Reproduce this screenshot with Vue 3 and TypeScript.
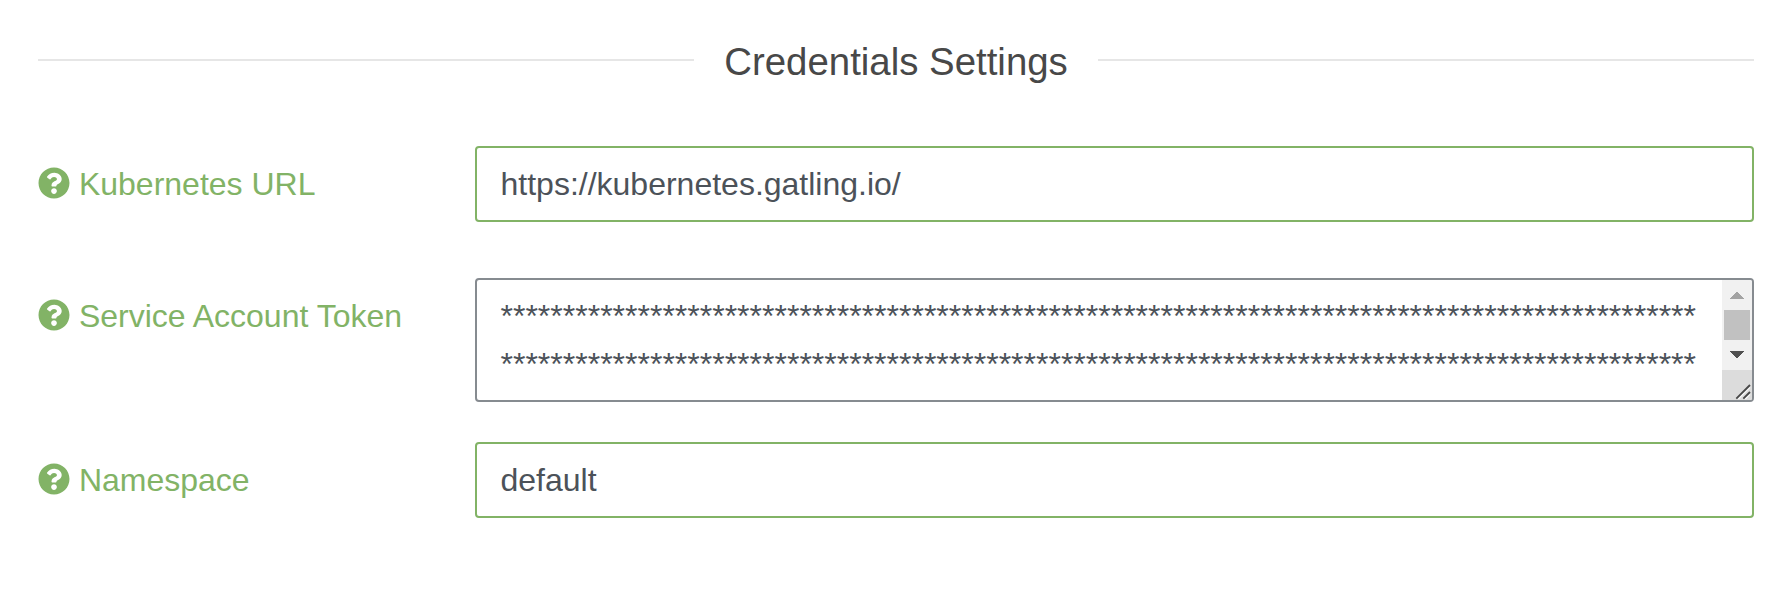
<script setup lang="ts">
import { ref } from 'vue'

interface Field {
  id: string
  label: string
  kind: 'text' | 'secret'
}

const fields: Field[] = [
  { id: 'url', label: 'Kubernetes URL', kind: 'text' },
  { id: 'token', label: 'Service Account Token', kind: 'secret' },
  { id: 'namespace', label: 'Namespace', kind: 'text' },
]

const values = ref<Record<string, string>>({
  url: 'https://kubernetes.gatling.io/',
  namespace: 'default',
})

const maskedLines: string[] = ['*'.repeat(96), '*'.repeat(96)]
</script>

<template>
  <form class="settings" @submit.prevent>
    <h2 class="heading">Credentials Settings</h2>
    <div v-for="field in fields" :key="field.id" class="row" :class="field.kind">
      <label class="label" :for="field.id">
        <svg class="help" viewBox="0 0 512 512" aria-hidden="true">
          <path
            fill="currentColor"
            d="M504 256c0 136.997-111.043 248-248 248S8 392.997 8 256C8 119.083 119.043 8 256 8s248 111.083 248 248zM262.655 90c-54.497 0-89.255 22.957-116.549 63.758-3.536 5.286-2.353 12.415 2.715 16.258l34.699 26.31c5.205 3.947 12.621 3.008 16.665-2.122 17.864-22.658 30.113-35.797 57.303-35.797 20.429 0 45.698 13.148 45.698 32.958 0 14.976-12.363 22.667-32.534 33.976C247.128 238.528 216 254.941 216 296v4c0 6.627 5.373 12 12 12h56c6.627 0 12-5.373 12-12v-1.333c0-28.462 83.186-29.647 83.186-106.667 0-58.002-60.165-102-116.531-102zM256 338c-25.365 0-46 20.635-46 46 0 25.364 20.635 46 46 46s46-20.636 46-46c0-25.364-20.635-46-46-46z"
          />
        </svg>
        <span>{{ field.label }}</span>
      </label>
      <input
        v-if="field.kind === 'text'"
        :id="field.id"
        v-model="values[field.id]"
        class="control"
        type="text"
        spellcheck="false"
      />
      <div v-else :id="field.id" class="control area">
        <div class="lines">
          <div v-for="(line, i) in maskedLines" :key="i">{{ line }}</div>
        </div>
        <div class="scrollbar">
          <svg class="cell" viewBox="0 0 30 30" shape-rendering="crispEdges">
            <path d="M7.5 19L15 11.5L22.5 19Z" fill="#a3a3a3" />
          </svg>
          <div class="thumb"></div>
          <svg class="cell" viewBox="0 0 30 30" shape-rendering="crispEdges">
            <path d="M7.5 11L15 18.5L22.5 11Z" fill="#505050" />
          </svg>
          <svg class="cell corner" viewBox="0 0 30 30">
            <path d="M16.3 29L28 17.3M23.3 29L28 24.3" stroke="#f5f5f5" stroke-width="1.6" />
            <path d="M14.3 28.7L28 15M21.3 28.7L28 22" stroke="#484848" stroke-width="1.8" />
          </svg>
        </div>
      </div>
    </div>
  </form>
</template>

<style>
body {
  background: #fff;
}
</style>

<style scoped>
.settings {
  box-sizing: border-box;
  height: 605px;
  padding: 38px 38px 0;
  font-family: 'Liberation Sans', Arial, sans-serif;
  font-size: 32px;
  line-height: 48px;
}

.heading {
  display: flex;
  align-items: center;
  gap: 30px;
  height: 48px;
  margin: 0 0 60px;
  color: #484848;
  font-size: 38.4px;
  font-weight: 400;
}

.heading::before,
.heading::after {
  content: '';
  flex: 1;
  height: 2px;
  margin-bottom: 4px;
  background: #e6e6e6;
}

.row {
  display: grid;
  grid-template-columns: 437px 1fr;
  align-items: start;
  margin-bottom: 56px;
}

.row.secret {
  margin-bottom: 40px;
}

.label {
  display: flex;
  align-items: center;
  gap: 8.9px;
  height: 76px;
  color: #82b366;
  white-space: nowrap;
}

.help {
  width: 32px;
  height: 32px;
  margin-bottom: 2px;
}

.control {
  box-sizing: border-box;
  width: 100%;
  height: 76px;
  margin: 0;
  padding: 12px 23.5px;
  border: 2px solid #82b366;
  border-radius: 4px;
  outline: none;
  background: #fff;
  color: #4c5259;
  font: inherit;
}

.area {
  display: flex;
  height: 124px;
  padding: 0;
  border-color: #868b90;
  overflow: hidden;
}

.lines {
  flex: 1;
  min-width: 0;
  padding: 12px 0 0 23.5px;
  white-space: nowrap;
}

.scrollbar {
  display: flex;
  flex-direction: column;
  width: 30px;
  background: #f1f1f1;
}

.cell {
  display: block;
  width: 30px;
  height: 30px;
}

.thumb {
  height: 30px;
  margin: 0 2px;
  background: #c1c1c1;
}

.corner {
  background: #dcdcdc;
}
</style>
